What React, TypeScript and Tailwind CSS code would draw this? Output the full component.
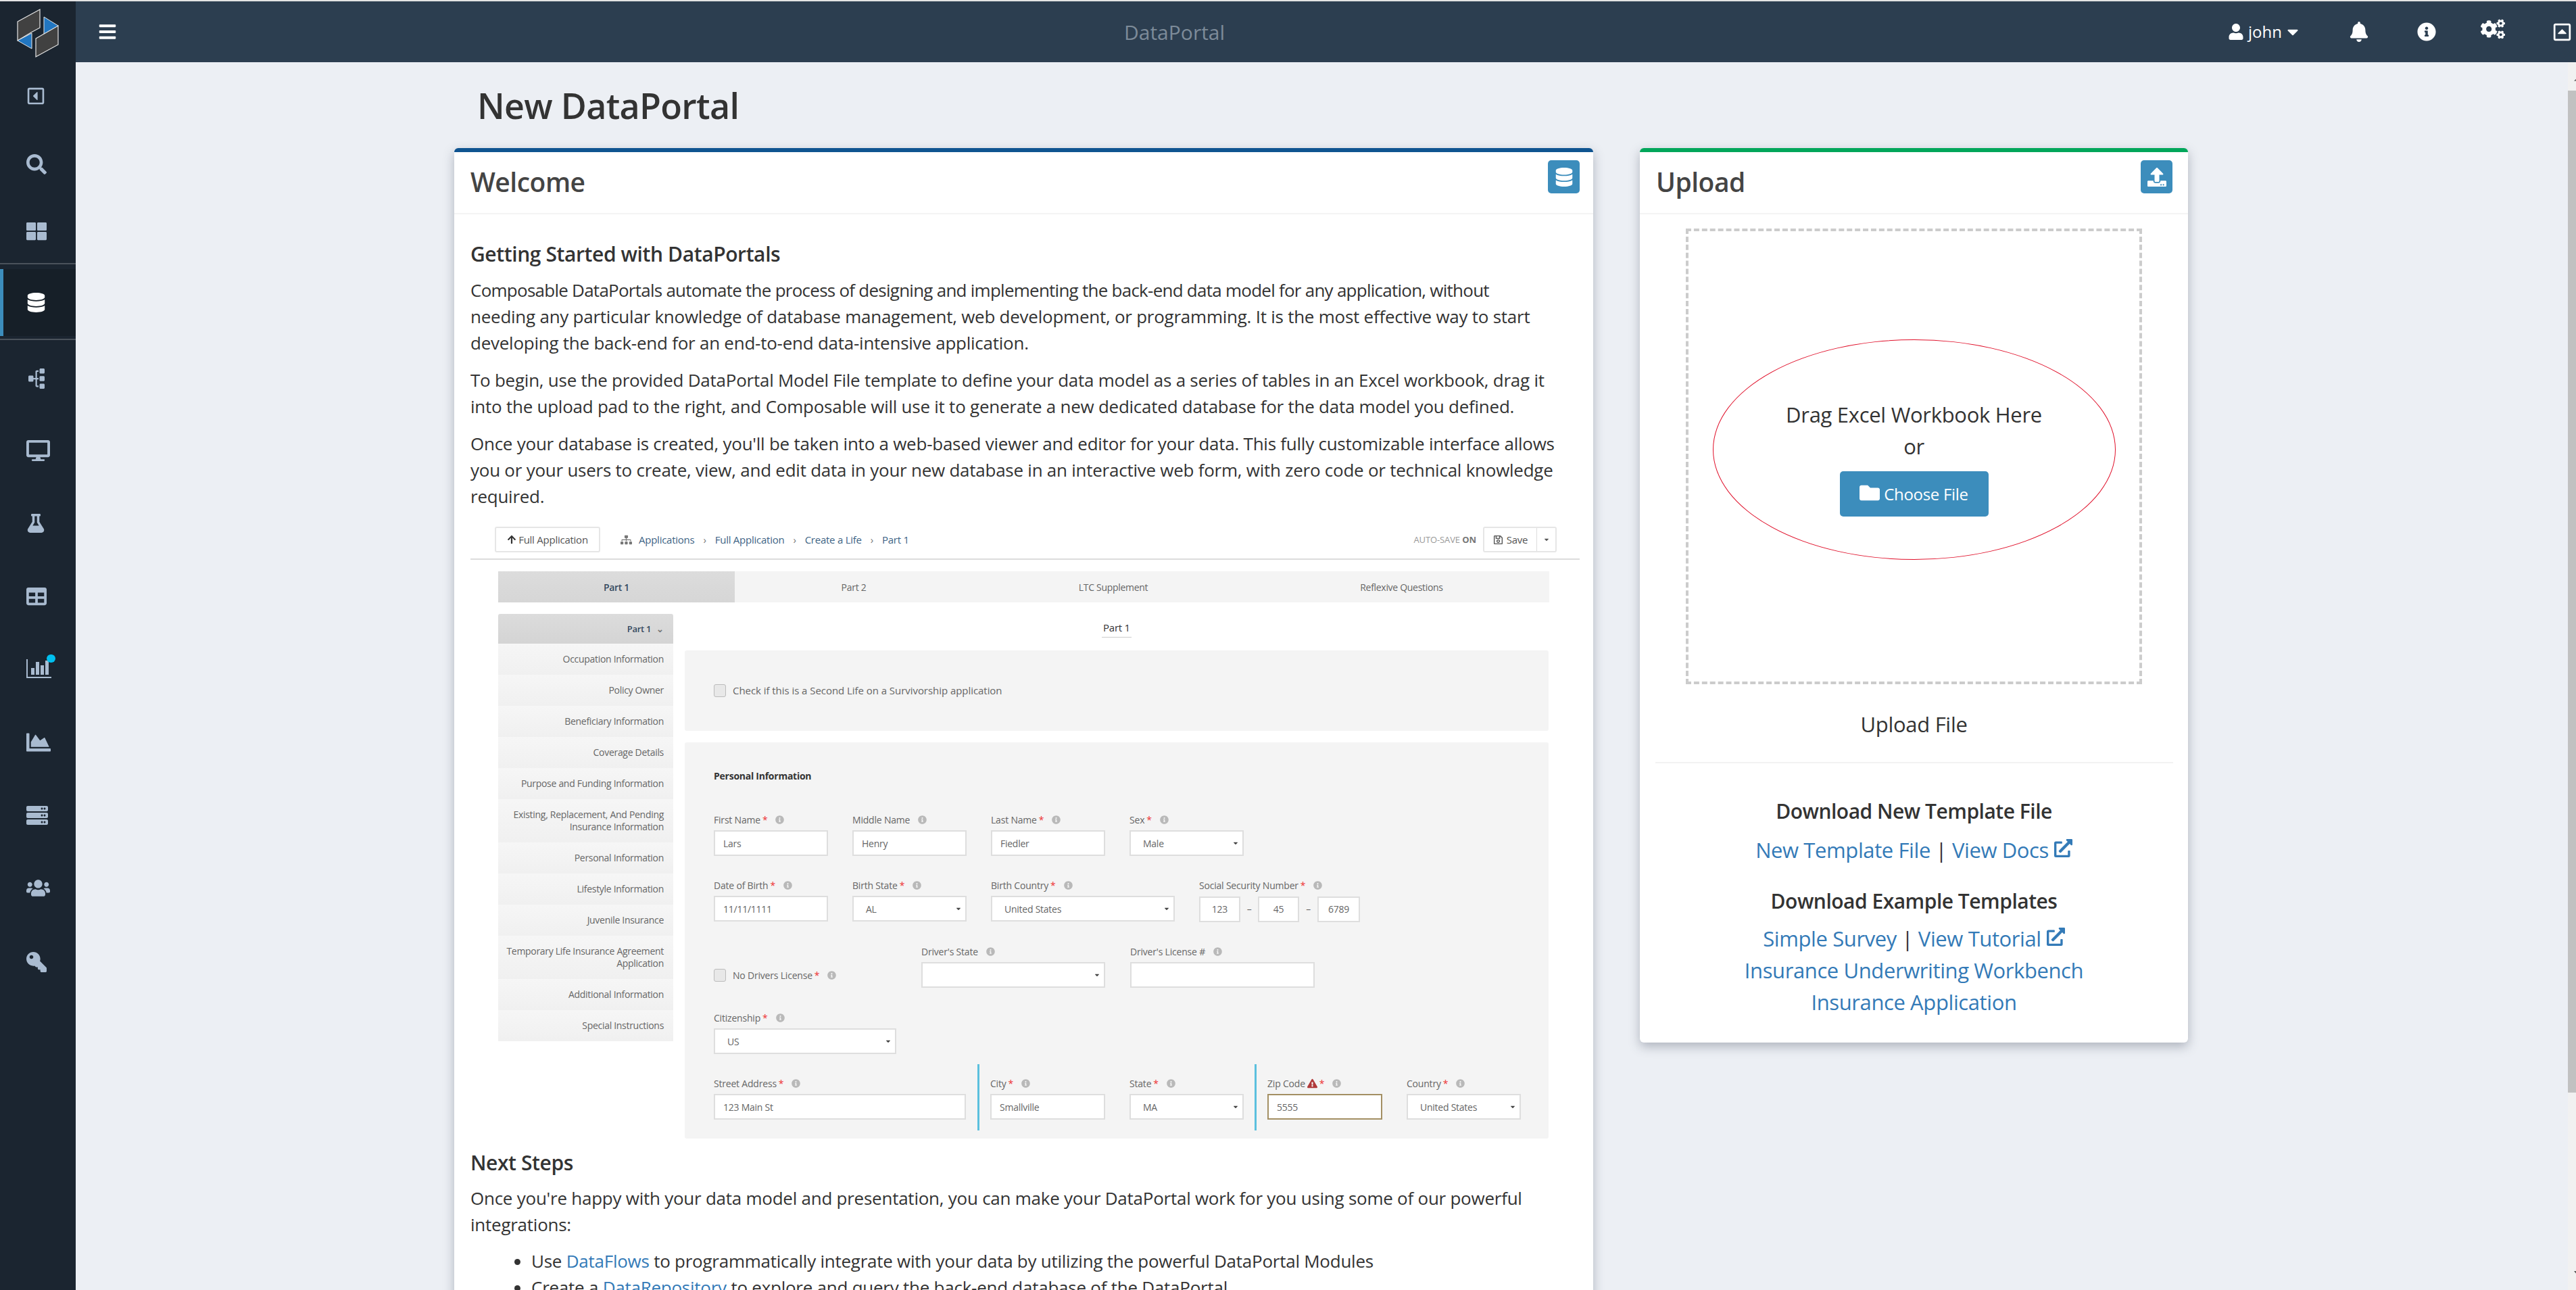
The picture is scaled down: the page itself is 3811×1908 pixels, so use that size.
import {
  FaArrowUp,
  FaBars,
  FaBell,
  FaCaretDown,
  FaChartArea,
  FaCogs,
  FaDatabase,
  FaDesktop,
  FaExclamationTriangle,
  FaExternalLinkAlt,
  FaFlask,
  FaFolder,
  FaInfoCircle,
  FaKey,
  FaRegCaretSquareLeft,
  FaRegCaretSquareUp,
  FaRegSave,
  FaSearch,
  FaServer,
  FaSitemap,
  FaTable,
  FaThLarge,
  FaUpload,
  FaUser,
  FaUsers,
} from "react-icons/fa";

const font = "font-['Open_Sans',sans-serif]";

function Logo() {
  return (
    <svg width="112" height="90" viewBox="0 0 112 90">
      <g stroke="#e6e6e6" strokeWidth="1.2">
        <polygon points="26,30 59,12 59,39 46,46 26,58" fill="#414141" />
        <polygon points="53,55 86,36 86,64 53,82" fill="#414141" />
      </g>
      <polygon points="26,58 47,47 47,70" fill="#2176c1" stroke="#e6e6e6" strokeWidth="1" />
      <polygon points="65,23 86,36 65,48" fill="#2176c1" stroke="#e6e6e6" strokeWidth="1" />
    </svg>
  );
}

function BarsIcon() {
  return (
    <svg width="37" height="28" viewBox="0 0 37 28" fill="#a9bbd0">
      <rect x="0" y="0" width="2" height="28" />
      <rect x="0" y="26" width="37" height="2" />
      <rect x="7" y="13" width="5" height="10" />
      <rect x="14" y="4" width="5" height="19" />
      <rect x="21" y="9" width="5" height="14" />
      <rect x="28" y="2" width="5" height="21" />
    </svg>
  );
}

function SideItem({ y, children }: { y: number; children: React.ReactNode }) {
  return (
    <div className="flex items-center pl-[39px] text-[#a9bbd0]" style={{ height: y }}>
      {children}
    </div>
  );
}

function Sidebar() {
  return (
    <aside className="flex w-[112px] shrink-0 flex-col bg-[#1b2530]">
      <div className="h-[90px]">
        <Logo />
      </div>
      <div className="h-[297px]">
        <SideItem y={100}>
          <FaRegCaretSquareLeft size={28} />
        </SideItem>
        <SideItem y={102}>
          <FaSearch size={30} />
        </SideItem>
        <SideItem y={95}>
          <FaThLarge size={30} />
        </SideItem>
      </div>
      <div className="h-[2px] bg-[#4a525b]" />
      <div className="h-[7px]" />
      <div className="flex h-[99px] items-center border-l-[5px] border-[#3c8dbc] bg-[#161f28] pl-[34px] text-white">
        <FaDatabase size={29} />
      </div>
      <div className="h-[4px]" />
      <div className="h-[2px] bg-[#4a525b]" />
      <div className="pt-[3px]">
        <SideItem y={108}>
          <FaSitemap size={30} className="-rotate-90" />
        </SideItem>
        <SideItem y={105}>
          <FaDesktop size={35} />
        </SideItem>
        <SideItem y={110}>
          <FaFlask size={28} />
        </SideItem>
        <SideItem y={106}>
          <FaTable size={30} />
        </SideItem>
        <SideItem y={107}>
          <div className="relative">
            <BarsIcon />
            <span className="absolute -top-[7px] left-[30px] h-[12px] w-[13px] rounded-full bg-[#00c0ef]" />
          </div>
        </SideItem>
        <SideItem y={111}>
          <FaChartArea size={36} />
        </SideItem>
        <SideItem y={106}>
          <FaServer size={32} />
        </SideItem>
        <SideItem y={109}>
          <FaUsers size={35} />
        </SideItem>
        <SideItem y={109}>
          <FaKey size={30} className="-scale-x-100" />
        </SideItem>
      </div>
    </aside>
  );
}

function Topbar() {
  return (
    <header className="relative flex h-[90px] shrink-0 items-center bg-[#2c3e50] pr-[6px] pl-[33px] text-white">
      <FaBars size={28} />
      <div className="ml-[6px] flex-1 text-center text-[30px] text-[#7d8b99]">DataPortal</div>
      <div className="flex items-center">
        <FaUser size={24} />
        <span className="ml-[6px] text-[24px] leading-none">john</span>
        <FaCaretDown size={26} className="ml-[3px]" />
        <FaBell size={30} className="ml-[70px]" />
        <FaInfoCircle size={28} className="ml-[71px]" />
        <FaCogs size={36} className="ml-[66px] -mt-[8px]" />
        <FaRegCaretSquareUp size={29} className="ml-[70px]" />
      </div>
    </header>
  );
}

function Info() {
  return <FaInfoCircle size={13} className="ml-[12px] text-[#b9b9b9]" />;
}

function Label({ text, req, warn }: { text: string; req?: boolean; warn?: boolean }) {
  return (
    <div className="flex h-[32px] items-center text-[14px] tracking-[-0.2px] whitespace-nowrap text-[#666]">
      {text}
      {warn && <FaExclamationTriangle size={15} className="ml-[3px] text-[#b13a3a]" />}
      {req && <span className="ml-[3px] text-[#e33]">*</span>}
      <Info />
    </div>
  );
}

function Box({
  w,
  value,
  select,
  warn,
  center,
}: {
  w: number;
  value?: string;
  select?: boolean;
  warn?: boolean;
  center?: boolean;
}) {
  return (
    <div
      className={`relative flex h-[38px] items-center border-2 bg-white pr-[6px] text-[14px] text-[#666] ${
        warn ? "border-[#a38f63]" : "border-[#dedede]"
      } ${select ? "pl-[18px]" : "pl-[12px]"} ${center ? "justify-center !pr-0 !pl-0" : ""}`}
      style={{ width: w }}
    >
      {value}
      {select && <FaCaretDown size={10} className="absolute top-[12px] right-[5px] text-[#444]" />}
    </div>
  );
}

function Field({
  label,
  w,
  value,
  select,
  req,
  warn,
  zip,
}: {
  label: string;
  w: number;
  value?: string;
  select?: boolean;
  req?: boolean;
  warn?: boolean;
  zip?: boolean;
}) {
  return (
    <div>
      <Label text={label} req={req} warn={warn} />
      <Box w={w} value={value} select={select} warn={zip} />
    </div>
  );
}

const navItems = [
  { t: "Occupation Information", h: 46 },
  { t: "Policy Owner", h: 46 },
  { t: "Beneficiary Information", h: 46 },
  { t: "Coverage Details", h: 46 },
  { t: "Purpose and Funding Information", h: 46 },
  { t: "Existing, Replacement, And Pending Insurance Information", h: 64 },
  { t: "Personal Information", h: 46 },
  { t: "Lifestyle Information", h: 46 },
  { t: "Juvenile Insurance", h: 46 },
  { t: "Temporary Life Insurance Agreement Application", h: 64 },
  { t: "Additional Information", h: 46 },
  { t: "Special Instructions", h: 46 },
];

function Checkbox() {
  return <span className="h-[19px] w-[18px] shrink-0 rounded-[3px] border border-[#bbb] bg-[#e8e8e8]" />;
}

function AppPreview() {
  return (
    <div className="mt-[16px] h-[916px] w-[1641px] whitespace-normal">
      <div className="flex h-[58px] items-start border-b-2 border-[#dcdcdc] pt-[9px] pr-[34px] pl-[36px] text-[15px] leading-[22px]">
        <div className="flex h-[38px] w-[156px] items-center justify-center rounded-[3px] border-2 border-[#e6e6e6] text-[#555]">
          <FaArrowUp size={14} className="mr-[3px] text-[#333]" />
          Full Application
        </div>
        <div className="ml-[30px] flex h-[38px] items-center text-[15px] text-[#3e6485]">
          <FaSitemap size={17} className="mr-[10px] text-[#777]" />
          Applications
          <span className="mx-[13px] text-[#777]">›</span>
          Full Application
          <span className="mx-[13px] text-[#777]">›</span>
          Create a Life
          <span className="mx-[13px] text-[#777]">›</span>
          Part 1
        </div>
        <div className="flex-1" />
        <div className="flex h-[38px] items-center text-[13px] tracking-[-0.1px] text-[#999]">
          AUTO-SAVE&nbsp;<b className="text-[#777]">ON</b>
        </div>
        <div className="ml-[10px] flex h-[38px] w-[109px] items-center rounded-[3px] border-2 border-[#e6e6e6] text-[#555]">
          <div className="flex flex-1 items-center justify-center">
            <FaRegSave size={15} className="mr-[5px]" />
            Save
          </div>
          <div className="flex h-full w-[28px] items-center justify-center border-l border-[#ddd]">
            <FaCaretDown size={10} />
          </div>
        </div>
      </div>

      <div className="mt-[17px] ml-[41px] flex h-[46px] w-[1555px] text-[14px] tracking-[-0.3px] text-[#666]">
        <div className="flex w-[350px] items-center justify-center bg-gradient-to-b from-[#dcdcdc] to-[#d6d6d6] font-semibold text-[#34495e]">
          Part 1
        </div>
        <div className="flex w-[352px] items-center justify-center bg-[#f4f4f4]">Part 2</div>
        <div className="flex w-[416px] items-center justify-center bg-[#f4f4f4]">LTC Supplement</div>
        <div className="flex flex-1 items-center justify-center bg-[#f4f4f4]">Reflexive Questions</div>
      </div>

      <div className="mt-[17px] ml-[41px] flex">
        <div className="w-[259px] shrink-0 self-start">
          <div className="flex h-[44px] items-center justify-end rounded-t-[3px] bg-gradient-to-b from-[#dcdcdc] to-[#d4d4d4] pr-[14px] text-[13px] font-semibold text-[#34495e]">
            Part 1<span className="ml-[8px] text-[#777]">⌄</span>
          </div>
          {navItems.map((n) => (
            <div
              key={n.t}
              className="flex items-center justify-end bg-gradient-to-b from-[#f6f6f6] to-[#f0f0f0] pr-[14px] pl-[6px] text-right text-[14px] leading-[18px] tracking-[-0.3px] text-[#666]"
              style={{ height: n.h }}
            >
              {n.t}
            </div>
          ))}
        </div>

        <div className="ml-[17px] w-[1278px]">
          <div className="flex h-[54px] flex-col items-center pt-[9px]">
            <div className="text-[15px] leading-[22px] text-[#333]">Part 1</div>
            <div className="mt-[3px] h-px w-[44px] bg-[#ccc]" />
          </div>
          <div className="flex h-[119px] items-center rounded-[3px] bg-[#f4f4f4] pl-[43px]">
            <Checkbox />
            <span className="ml-[10px] text-[15px] tracking-[-0.05px] text-[#666]">
              Check if this is a Second Life on a Survivorship application
            </span>
          </div>
          <div className="mt-[17px] rounded-[3px] bg-[#f4f4f4] pt-[38px] pb-[12px] pl-[43px]">
            <div className="h-[24px] text-[14px] leading-[24px] font-bold text-[#333]">Personal Information</div>

            <div className="mt-[36px] flex gap-[36px]">
              <Field label="First Name" req w={169} value="Lars" />
              <Field label="Middle Name" w={169} value="Henry" />
              <Field label="Last Name" req w={169} value="Fiedler" />
              <Field label="Sex" req w={169} value="Male" select />
            </div>

            <div className="mt-[27px] flex gap-[36px]">
              <Field label="Date of Birth" req w={169} value="11/11/1111" />
              <Field label="Birth State" req w={169} value="AL" select />
              <Field label="Birth Country" req w={272} value="United States" select />
              <div>
                <Label text="Social Security Number" req />
                <div className="flex items-center text-[14px] text-[#666]">
                  <Box w={61} value="123" center />
                  <span className="w-[26px] text-center">–</span>
                  <Box w={61} value="45" center />
                  <span className="w-[27px] text-center">–</span>
                  <Box w={63} value="6789" center />
                </div>
              </div>
            </div>

            <div className="mt-[27px] flex">
              <div className="flex w-[307px] items-center pt-[32px]">
                <Checkbox />
                <span className="ml-[10px] text-[14px] tracking-[-0.2px] text-[#666]">No Drivers License</span>
                <span className="ml-[3px] text-[14px] text-[#e33]">*</span>
                <Info />
              </div>
              <Field label="Driver's State" w={272} select />
              <div className="ml-[37px]">
                <Field label="Driver's License #" w={273} />
              </div>
            </div>

            <div className="mt-[27px]">
              <Field label="Citizenship" req w={270} value="US" select />
            </div>

            <div className="mt-[27px] flex">
              <Field label="Street Address" req w={373} value="123 Main St" />
              <div className="mt-[-12px] ml-[17px] h-[98px] w-[3px] bg-[#5bc0de]" />
              <div className="ml-[16px]">
                <Field label="City" req w={170} value="Smallville" />
              </div>
              <div className="ml-[36px]">
                <Field label="State" req w={169} value="MA" select />
              </div>
              <div className="mt-[-12px] ml-[16px] h-[98px] w-[3px] bg-[#5bc0de]" />
              <div className="ml-[16px]">
                <Field label="Zip Code" req warn zip w={170} value="5555" />
              </div>
              <div className="ml-[36px]">
                <Field label="Country" req w={169} value="United States" select />
              </div>
            </div>
          </div>
        </div>
      </div>
    </div>
  );
}

function Card({
  title,
  color,
  icon,
  className,
  headClass,
  children,
}: {
  title: string;
  color: string;
  icon: React.ReactNode;
  className: string;
  headClass: string;
  children: React.ReactNode;
}) {
  return (
    <section
      className={`rounded-[6px] border-t-[6px] bg-white shadow-[0_6px_16px_rgba(60,70,90,0.35)] ${color} ${className}`}
    >
      <div
        className={`flex h-[92px] items-start justify-between border-b-2 border-[#f4f4f4] pt-[12px] pl-[24px] ${headClass}`}
      >
        <h3 className="mt-[7px] text-[39px] leading-[50px] font-semibold tracking-[-0.5px] text-[#444]">{title}</h3>
        <div className="flex h-[49px] w-[47px] items-center justify-center rounded-[5px] bg-[#3c8dbc] text-white">
          {icon}
        </div>
      </div>
      {children}
    </section>
  );
}

const linkCls = "text-[#337ab7]";
const linkLine = "text-[31px] leading-[47px] tracking-[-0.4px] text-[#337ab7]";
const subHead = "h-[47px] text-[30px] leading-[47px] font-semibold tracking-[-0.5px]";

function Welcome() {
  return (
    <Card
      title="Welcome"
      color="border-[#0f5490]"
      className="h-[1800px] w-[1685px] shrink-0"
      headClass="pr-[20px]"
      icon={<FaDatabase size={28} />}
    >
      <div className="pt-[39px] pl-[24px] text-[26px] leading-[39px] tracking-[-0.25px] whitespace-nowrap text-[#333]">
        <h4 className="h-[39px] text-[30px] leading-[39px] font-semibold tracking-[-0.4px]">
          Getting Started with DataPortals
        </h4>
        <p className="mt-[15px]">
          <span className="tracking-[-0.75px]">
            Composable DataPortals automate the process of designing and implementing the back-end data model for any
            application, without
          </span>
          <br />
          needing any particular knowledge of database management, web development, or programming. It is the most
          effective way to start
          <br />
          developing the back-end for an end-to-end data-intensive application.
        </p>
        <p className="mt-[16px]">
          To begin, use the provided DataPortal Model File template to define your data model as a series of tables in
          an Excel workbook, drag it
          <br />
          into the upload pad to the right, and Composable will use it to generate a new dedicated database for the data
          model you defined.
        </p>
        <p className="mt-[16px]">
          Once your database is created, you'll be taken into a web-based viewer and editor for your data. This fully
          customizable interface allows
          <br />
          you or your users to create, view, and edit data in your new database in an interactive web form, with zero
          code or technical knowledge
          <br />
          required.
        </p>
        <AppPreview />
        <h4 className="mt-[14px] h-[39px] text-[30px] leading-[39px] font-semibold tracking-[-0.4px]">Next Steps</h4>
        <p className="mt-[14px]">
          Once you're happy with your data model and presentation, you can make your DataPortal work for you using some
          of our powerful
          <br />
          integrations:
        </p>
        <ul className="mt-[15px] list-disc pl-[90px]">
          <li>
            Use <span className={linkCls}>DataFlows</span> to programmatically integrate with your data by utilizing the
            powerful DataPortal Modules
          </li>
          <li>
            Create a <span className={linkCls}>DataRepository</span> to explore and query the back-end database of the
            DataPortal
          </li>
        </ul>
      </div>
    </Card>
  );
}

function Upload() {
  return (
    <Card
      title="Upload"
      color="border-[#00a65a]"
      className="h-[1323px] w-[811px] shrink-0"
      headClass="pr-[23px]"
      icon={<FaUpload size={28} />}
    >
      <div className="flex flex-col items-center pt-[21px] text-[#333]">
        <div className="flex h-[674px] w-[675px] items-center justify-center border-4 border-dashed border-[#ccc] pb-[20px]">
          <div className="flex h-[326px] w-[596px] flex-col items-center rounded-[50%] border border-[#e0102a] pt-[87px] text-[31px] leading-[47px] tracking-[-0.3px]">
            <div>Drag Excel Workbook Here</div>
            <div>or</div>
            <div className="mt-[13px] flex h-[67px] w-[220px] items-center justify-center rounded-[5px] bg-[#3c8dbc] text-[24px] text-white">
              <FaFolder size={30} className="mr-[6px] -mt-[4px]" />
              Choose File
            </div>
          </div>
        </div>
        <div className="mt-[36px] h-[47px] text-[31px] leading-[47px] tracking-[-0.3px]">Upload File</div>
        <div className="mt-[32px] h-[2px] w-[766px] bg-[#f2f2f2]" />
        <div className={`mt-[47px] ${subHead}`}>Download New Template File</div>
        <div className={`mt-[11px] flex h-[47px] items-center ${linkLine}`}>
          New Template File&nbsp;<span className="text-[#333]">|</span>&nbsp;View Docs
          <FaExternalLinkAlt size={27} className="ml-[8px] -mt-[6px]" />
        </div>
        <div className={`mt-[28px] ${subHead}`}>Download Example Templates</div>
        <div className={`mt-[9px] flex h-[47px] items-center ${linkLine}`}>
          Simple Survey&nbsp;<span className="text-[#333]">|</span>&nbsp;View Tutorial
          <FaExternalLinkAlt size={27} className="ml-[8px] -mt-[6px]" />
        </div>
        <div className={linkLine}>Insurance Underwriting Workbench</div>
        <div className={linkLine}>Insurance Application</div>
      </div>
    </Card>
  );
}

function Scrollbar() {
  return (
    <div className="relative flex w-[12px] shrink-0 flex-col overflow-hidden bg-[#f1f1f1] pt-[42px] pb-[292px]">
      <div className="flex-1 bg-[#c1c1c1]" />
      <span className="absolute top-[22px] left-[9px] h-0 w-0 border-x-[5px] border-b-[6px] border-x-transparent border-b-[#777]" />
      <span className="absolute bottom-[22px] left-[9px] h-0 w-0 border-x-[5px] border-t-[6px] border-x-transparent border-t-[#555]" />
    </div>
  );
}

export default function App() {
  return (
    <div className={`flex h-screen flex-col overflow-hidden bg-[#e4e4e4] pt-[2px] ${font}`}>
      <div className="flex min-h-0 flex-1">
        <Sidebar />
        <div className="flex min-w-0 flex-1 flex-col">
          <Topbar />
          <div className="flex min-h-0 flex-1">
            <main className="min-w-0 flex-1 overflow-hidden bg-[#ecEff4] pl-[560px]">
              <h1 className="flex h-[127px] items-center pl-[34px] text-[52px] font-semibold tracking-[-0.7px] text-[#333]">
                New DataPortal
              </h1>
              <div className="flex items-start gap-[69px]">
                <Welcome />
                <Upload />
              </div>
            </main>
            <Scrollbar />
          </div>
        </div>
      </div>
    </div>
  );
}
